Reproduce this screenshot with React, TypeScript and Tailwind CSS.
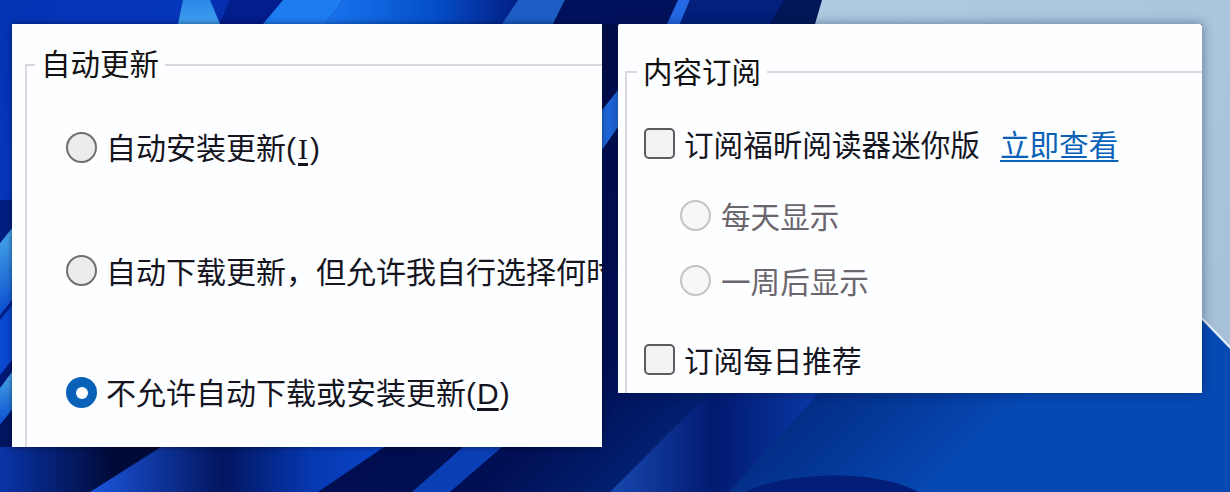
const cjk = "font-['Noto_Sans_CJK_SC','Noto_Sans',sans-serif]"

function Wallpaper() {
  return (
    <svg className="absolute inset-0" width="1230" height="492" viewBox="0 0 1230 492">
      <defs>
        <linearGradient id="base" x1="0" y1="0" x2="1" y2="0.4">
          <stop offset="0" stopColor="#0433b4" />
          <stop offset="0.14" stopColor="#0636bc" />
          <stop offset="0.22" stopColor="#021c84" />
          <stop offset="0.4" stopColor="#000d48" />
          <stop offset="0.68" stopColor="#000f54" />
          <stop offset="1" stopColor="#0649b4" />
        </linearGradient>
        <linearGradient id="light" x1="0" y1="0" x2="1" y2="1">
          <stop offset="0" stopColor="#aecbe2" />
          <stop offset="1" stopColor="#a6c0d8" />
        </linearGradient>
        <linearGradient id="bright" x1="0" y1="0" x2="0" y2="1">
          <stop offset="0" stopColor="#2a88e8" />
          <stop offset="1" stopColor="#3f9fee" />
        </linearGradient>
        <linearGradient id="sweep" x1="0" y1="0" x2="1" y2="0">
          <stop offset="0" stopColor="#1a74ee" />
          <stop offset="0.55" stopColor="#0550cc" />
          <stop offset="1" stopColor="#021f84" />
        </linearGradient>
        <linearGradient id="corner" x1="0" y1="0" x2="1" y2="0">
          <stop offset="0" stopColor="#0a34a8" />
          <stop offset="0.7" stopColor="#000a38" />
          <stop offset="1" stopColor="#000a38" />
        </linearGradient>
        <linearGradient id="band1" x1="0" y1="0" x2="1" y2="0">
          <stop offset="0" stopColor="#1b56dc" />
          <stop offset="0.45" stopColor="#02155f" />
          <stop offset="0.75" stopColor="#0638b0" />
          <stop offset="1" stopColor="#0a45c8" />
        </linearGradient>
        <linearGradient id="band2" x1="0" y1="0" x2="1" y2="0">
          <stop offset="0" stopColor="#1848b0" />
          <stop offset="0.5" stopColor="#021a70" />
          <stop offset="1" stopColor="#0a3aa8" />
        </linearGradient>
        <linearGradient id="edge" x1="0" y1="0" x2="0" y2="1">
          <stop offset="0" stopColor="#48a8ea" />
          <stop offset="1" stopColor="#0a4ed0" />
        </linearGradient>
      </defs>
      <rect width="1230" height="492" fill="url(#base)" />
      <path d="M178 24L183 0H210L220 24Z" fill="url(#bright)" />
      <path d="M220 24L230 0H283L263 24Z" fill="#021d8c" />
      <path d="M263 24L283 0H343L325 24Z" fill="#1d7cf0" />
      <path d="M325 24L343 0H518L502 24Z" fill="url(#sweep)" />
      <path d="M502 24L518 0H565L553 24Z" fill="#1c5cc4" />
      <path d="M553 24L565 0H690L667 24Z" fill="#00115c" />
      <path d="M667 24L678 0H690L680 24Z" fill="#2468e4" />
      <path d="M680 24L690 0H784L770 24Z" fill="#02207c" />
      <path d="M770 24L784 0H822L815 24Z" fill="#021758" />
      <path d="M815 24L822 0H1230V345L1202 316V24Z" fill="url(#light)" />
      <path d="M1202 316L1230 345V349L1202 320Z" fill="#dfeaf4" />
      <path d="M0 243L12 228V300L0 315Z" fill="url(#edge)" />
      <path d="M0 320L12 305V360L0 375Z" fill="#0a48d0" />
      <path d="M0 388L12 372V410L0 425Z" fill="url(#edge)" />
      <path d="M0 200H12V228L0 243Z" fill="#031f84" />
      <path d="M0 425L12 410V447H0Z" fill="#021560" />
      <path d="M602 110L618 90V127L602 150Z" fill="#1f68dc" />
      <path d="M0 447H161L90 492H0Z" fill="url(#corner)" />
      <path d="M161 447H384L318 492H90Z" fill="url(#band1)" />
      <path d="M463 447H502L450 492H412Z" fill="#0b3fb4" />
      <path d="M709 393H819L729 492H610Z" fill="url(#band2)" />
      <path d="M745 492C790 470 880 470 918 492Z" fill="#031e78" />
    </svg>
  )
}

function Radio({ checked, disabled }: { checked?: boolean; disabled?: boolean }) {
  if (checked) {
    return (
      <span className="flex h-[31px] w-[31px] shrink-0 items-center justify-center rounded-full bg-[#0a62b8]">
        <span className="h-[12px] w-[12px] rounded-full bg-white" />
      </span>
    )
  }
  return (
    <span
      className={
        disabled
          ? 'h-[31px] w-[31px] shrink-0 rounded-full border-2 border-[#c4c4c6] bg-[#f7f7f8]'
          : 'h-[31px] w-[31px] shrink-0 rounded-full border-2 border-[#6f6f6f] bg-[#ececec]'
      }
    />
  )
}

function Checkbox() {
  return <span className="h-[31px] w-[31px] shrink-0 rounded-[5px] border-2 border-[#5f5a60] bg-[#f2f2f2]" />
}

function Mnemonic({ letter, serif }: { letter: string; serif?: boolean }) {
  return (
    <span className="font-['Liberation_Sans',sans-serif] text-[#15151f]">
      (
      <span className={serif ? "mx-[2px] font-['Liberation_Serif',serif] underline underline-offset-4" : 'mx-px underline underline-offset-4'}>
        {letter}
      </span>
      )
    </span>
  )
}

export default function App() {
  return (
    <div className={`relative h-[492px] w-[1230px] overflow-hidden ${cjk}`}>
      <Wallpaper />
      <div className="relative flex items-start gap-4 pl-3 pt-6">
        <section className="h-[423px] w-[590px] overflow-hidden bg-[#fdfeff] pl-[13px] pt-[26px] shadow-[0_0_6px_rgba(0,0,20,0.5)]">
          <fieldset className="h-[420px] border-l-2 border-t-2 border-[#d8d8de]">
            <legend className="ml-[8px] -translate-y-[3px] px-[6px] text-[29.5px] leading-[30px] text-[#111]">自动更新</legend>
            <div className="flex flex-col gap-[90.5px] pl-[39px] pt-[51px] text-[30px] leading-[31px] text-[#15151f]">
              <label className="flex items-center gap-[9px] whitespace-nowrap">
                <Radio />
                <span>自动安装更新<Mnemonic letter="I" serif /></span>
              </label>
              <label className="flex items-center gap-[9px] whitespace-nowrap">
                <Radio />
                <span>自动下载更新，但允许我自行选择何时安装</span>
              </label>
              <label className="flex items-center gap-[9px] whitespace-nowrap">
                <Radio checked />
                <span>不允许自动下载或安装更新<Mnemonic letter="D" /></span>
              </label>
            </div>
          </fieldset>
        </section>
        <section className="h-[369px] w-[584px] overflow-hidden rounded-t-[2px] bg-[#fdfeff] pl-[7px] pt-[33px] shadow-[0_0_12px_rgba(0,20,60,0.45)]">
          <fieldset className="h-[340px] border-l-2 border-t-2 border-[#d8d8de]">
            <legend className="ml-[10px] -translate-y-[2px] px-[6px] text-[29.5px] leading-[30px] text-[#111]">内容订阅</legend>
            <div className="pl-[17px] pt-[41px] text-[29.6px] leading-[31px] text-[#15151f]">
              <div className="flex items-center gap-[9px] whitespace-nowrap">
                <Checkbox />
                <span>订阅福昕阅读器迷你版</span>
                <a className="ml-[11px] text-[#0a62b8] underline underline-offset-4">立即查看</a>
              </div>
              <div className="flex flex-col gap-[34px] pl-[36px] pt-[41px] text-[#6b666e]">
                <label className="flex items-center gap-[10px]"><Radio disabled />每天显示</label>
                <label className="flex items-center gap-[10px]"><Radio disabled />一周后显示</label>
              </div>
              <div className="mt-[48px] flex items-center gap-[9px]"><Checkbox />订阅每日推荐</div>
            </div>
          </fieldset>
        </section>
      </div>
    </div>
  )
}
